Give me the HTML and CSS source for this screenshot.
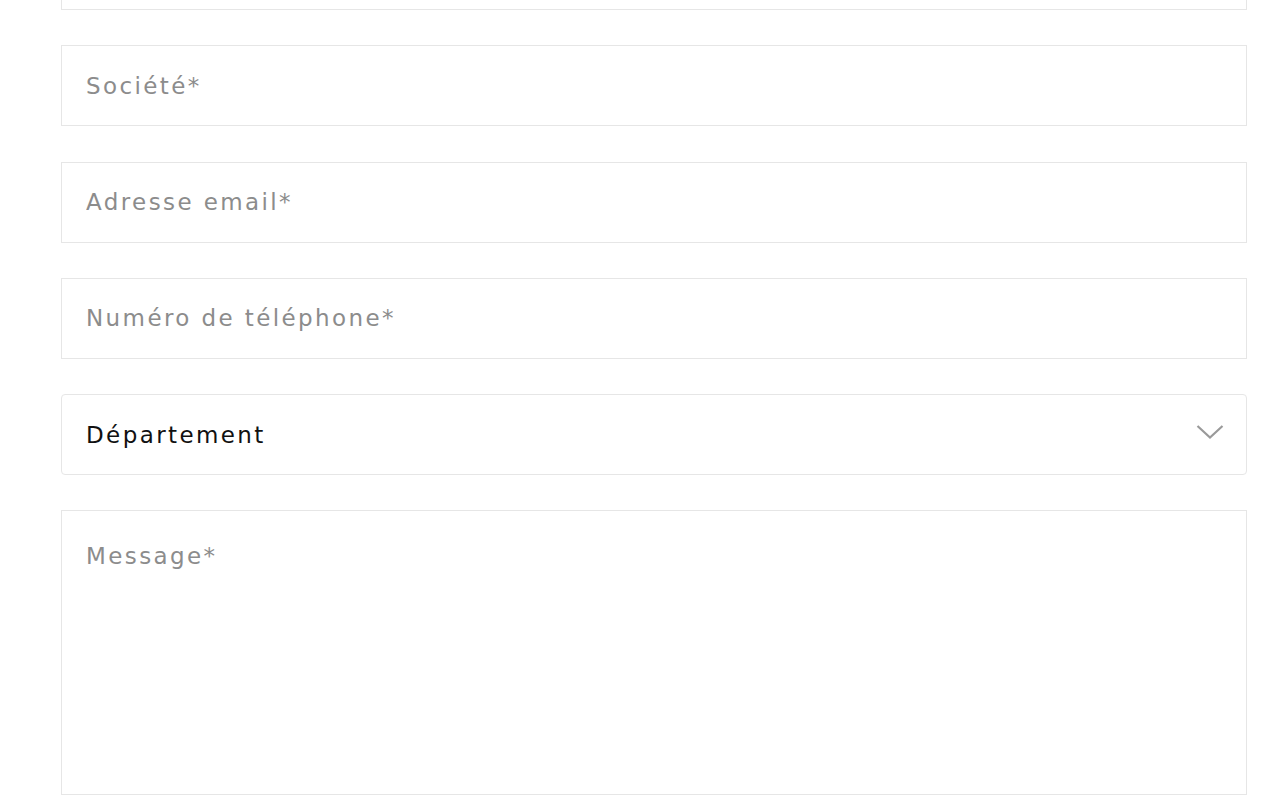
FILE: index.html
```html
<!DOCTYPE html>
<html lang="fr">
<head>
<meta charset="utf-8">
<title>Contact</title>
<link rel="stylesheet" href="styles.css">
</head>
<body>
<form class="form">
  <div class="field"><input class="input" type="text" placeholder="Nom*"></div>
  <div class="field"><input class="input" type="text" placeholder="Société*"></div>
  <div class="field"><input class="input" type="email" placeholder="Adresse email*"></div>
  <div class="field"><input class="input" type="tel" placeholder="Numéro de téléphone*"></div>
  <div class="field select-wrap">
    <div class="select">
      <span class="select-label">Département</span>
      <svg class="chevron" width="28" height="16" viewBox="0 0 28 16"><path d="M1.5 2 L14 13.5 L26.5 2" fill="none" stroke="#9a9a9a" stroke-width="2.2"/></svg>
    </div>
  </div>
  <div class="field"><textarea class="textarea" placeholder="Message*"></textarea></div>
</form>
</body>
</html>
```
FILE: styles.css
```css
html, body {
  margin: 0;
  padding: 0;
  background: #ffffff;
}
body {
  font-family: "DejaVu Sans", "Liberation Sans", sans-serif;
  overflow: hidden;
}
.form {
  display: flex;
  flex-direction: column;
  gap: 35.25px;
  margin: -71px 0 0 61px;
  width: 1186px;
}
.field {
  display: block;
}
.input, .select, .textarea {
  box-sizing: border-box;
  width: 100%;
  height: 81px;
  border: 1px solid #e6e6e6;
  background: #fff;
  padding: 0 24px;
  font-family: inherit;
  font-size: 23px;
  letter-spacing: 2.4px;
  color: #111;
  outline: none;
  margin: 0;
  display: block;
}
.input::placeholder, .textarea::placeholder {
  color: #8c8c8c;
  opacity: 1;
}
.select {
  border-radius: 4px;
  display: flex;
  align-items: center;
  justify-content: space-between;
  padding-right: 22px;
}
.select-label {
  color: #111;
}
.chevron {
  display: block;
  margin-top: -6px;
}
.textarea {
  height: 285px;
  padding-top: 32px;
  resize: none;
}
```
